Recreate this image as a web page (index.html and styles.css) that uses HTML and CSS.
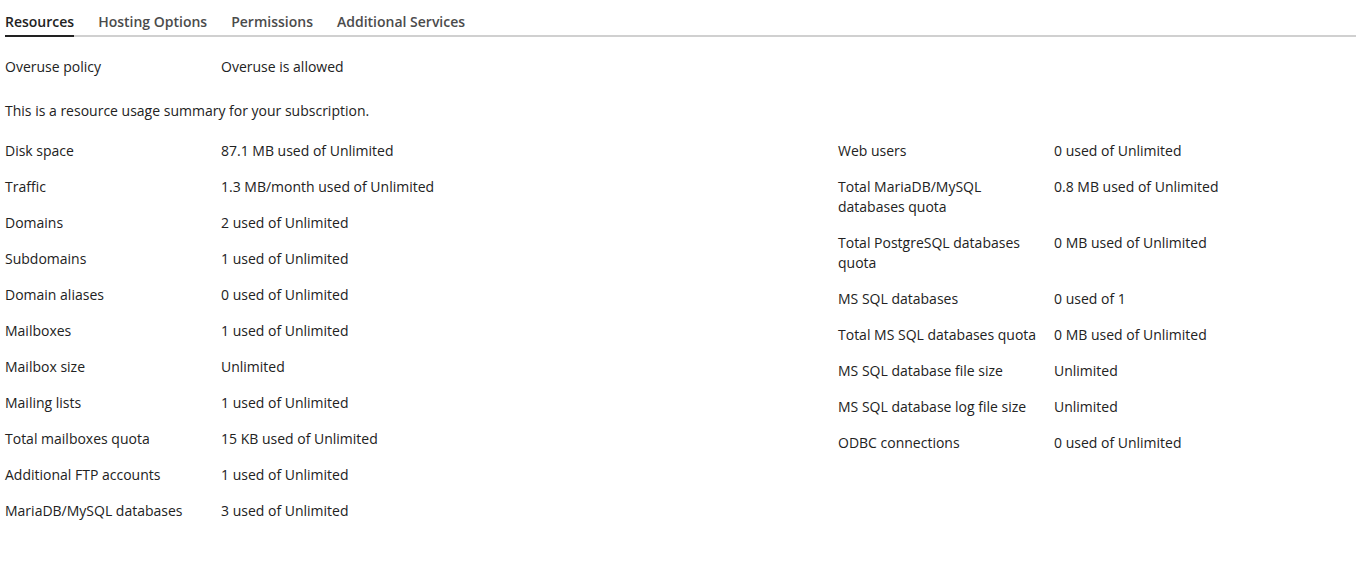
FILE: index.html
```html
<!DOCTYPE html>
<html>
<head>
<meta charset="utf-8">
<link rel="stylesheet" href="styles.css">
</head>
<body>
<div class="page">
  <nav class="tabs">
    <span class="tab active">Resources</span>
    <span class="tab">Hosting Options</span>
    <span class="tab">Permissions</span>
    <span class="tab">Additional Services</span>
  </nav>
  <div class="row policy">
    <div class="label">Overuse policy</div>
    <div class="value">Overuse is allowed</div>
  </div>
  <p class="summary">This is a resource usage summary for your subscription.</p>
  <div class="columns">
    <div class="col">
      <div class="row"><div class="label">Disk space</div><div class="value">87.1 MB used of Unlimited</div></div>
      <div class="row"><div class="label">Traffic</div><div class="value">1.3 MB/month used of Unlimited</div></div>
      <div class="row"><div class="label">Domains</div><div class="value">2 used of Unlimited</div></div>
      <div class="row"><div class="label">Subdomains</div><div class="value">1 used of Unlimited</div></div>
      <div class="row"><div class="label">Domain aliases</div><div class="value">0 used of Unlimited</div></div>
      <div class="row"><div class="label">Mailboxes</div><div class="value">1 used of Unlimited</div></div>
      <div class="row"><div class="label">Mailbox size</div><div class="value">Unlimited</div></div>
      <div class="row"><div class="label">Mailing lists</div><div class="value">1 used of Unlimited</div></div>
      <div class="row"><div class="label">Total mailboxes quota</div><div class="value">15 KB used of Unlimited</div></div>
      <div class="row"><div class="label">Additional FTP accounts</div><div class="value">1 used of Unlimited</div></div>
      <div class="row"><div class="label">MariaDB/MySQL databases</div><div class="value">3 used of Unlimited</div></div>
    </div>
    <div class="col">
      <div class="row"><div class="label">Web users</div><div class="value">0 used of Unlimited</div></div>
      <div class="row"><div class="label">Total MariaDB/MySQL databases quota</div><div class="value">0.8 MB used of Unlimited</div></div>
      <div class="row"><div class="label">Total PostgreSQL databases quota</div><div class="value">0 MB used of Unlimited</div></div>
      <div class="row"><div class="label">MS SQL databases</div><div class="value">0 used of 1</div></div>
      <div class="row"><div class="label">Total MS SQL databases quota</div><div class="value">0 MB used of Unlimited</div></div>
      <div class="row"><div class="label">MS SQL database file size</div><div class="value">Unlimited</div></div>
      <div class="row"><div class="label">MS SQL database log file size</div><div class="value">Unlimited</div></div>
      <div class="row"><div class="label">ODBC connections</div><div class="value">0 used of Unlimited</div></div>
    </div>
  </div>
</div>
</body>
</html>
```

FILE: styles.css
```css
html, body {
  margin: 0;
  padding: 0;
  background: #fff;
}
body {
  font-family: "Open Sans", "DejaVu Sans", sans-serif;
  font-size: 14px;
  line-height: 20px;
  color: #222;
}
.page {
  padding-left: 5px;
}
.tabs {
  display: flex;
  gap: 24px;
  border-bottom: 2px solid #d0d0d0;
}
.tab {
  font-weight: 600;
  color: #4b4b4b;
  padding: 12px 0 3px;
  border-bottom: 2px solid transparent;
  margin-bottom: -2px;
}
.tab.active {
  color: #222;
  border-bottom-color: #222;
}
.row {
  display: flex;
  padding-bottom: 16px;
}
.label {
  width: 200px;
  padding-right: 16px;
  flex: none;
}
.value {
  flex: 1;
}
.policy {
  margin-top: 20px;
  padding-bottom: 0;
}
.summary {
  margin: 24px 0 20px;
}
.columns {
  display: grid;
  grid-template-columns: 833px 1fr;
}
```
